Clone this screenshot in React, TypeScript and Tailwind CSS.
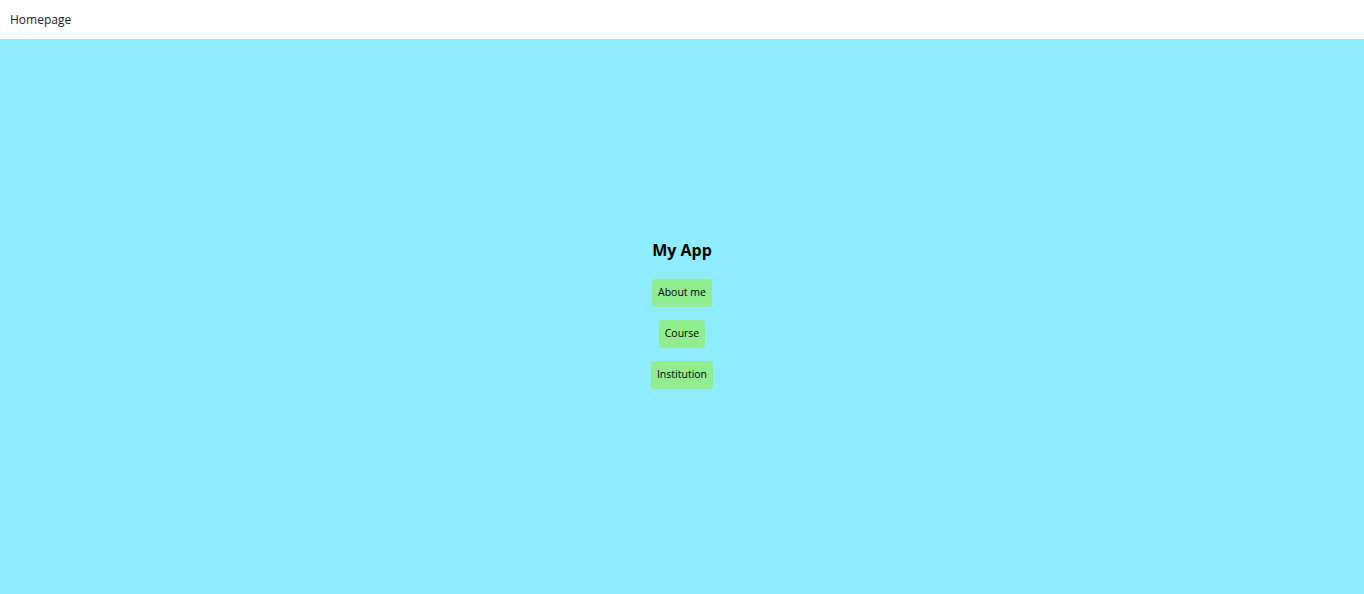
import React from "react";

export default function App() {
  return (
    <div className="flex h-[594px] w-full flex-col font-['Open_Sans',sans-serif]">
      <header className="flex h-[39px] shrink-0 items-center bg-white px-[10px] text-[12px] text-[#222]">
        Homepage
      </header>
      <main className="flex flex-1 flex-col items-center justify-center bg-[#90edff] pb-[4px]">
        <h1 className="mb-[19px] text-[16px] font-bold leading-[20px] text-black">My App</h1>
        <div className="flex flex-col items-center gap-[13px]">
          {["About me", "Course", "Institution"].map((t) => (
            <button
              key={t}
              className="flex h-[28px] items-center rounded-[3px] bg-[#90ee90] px-[6px] text-[10.5px] text-black"
            >
              {t}
            </button>
          ))}
        </div>
      </main>
    </div>
  );
}
